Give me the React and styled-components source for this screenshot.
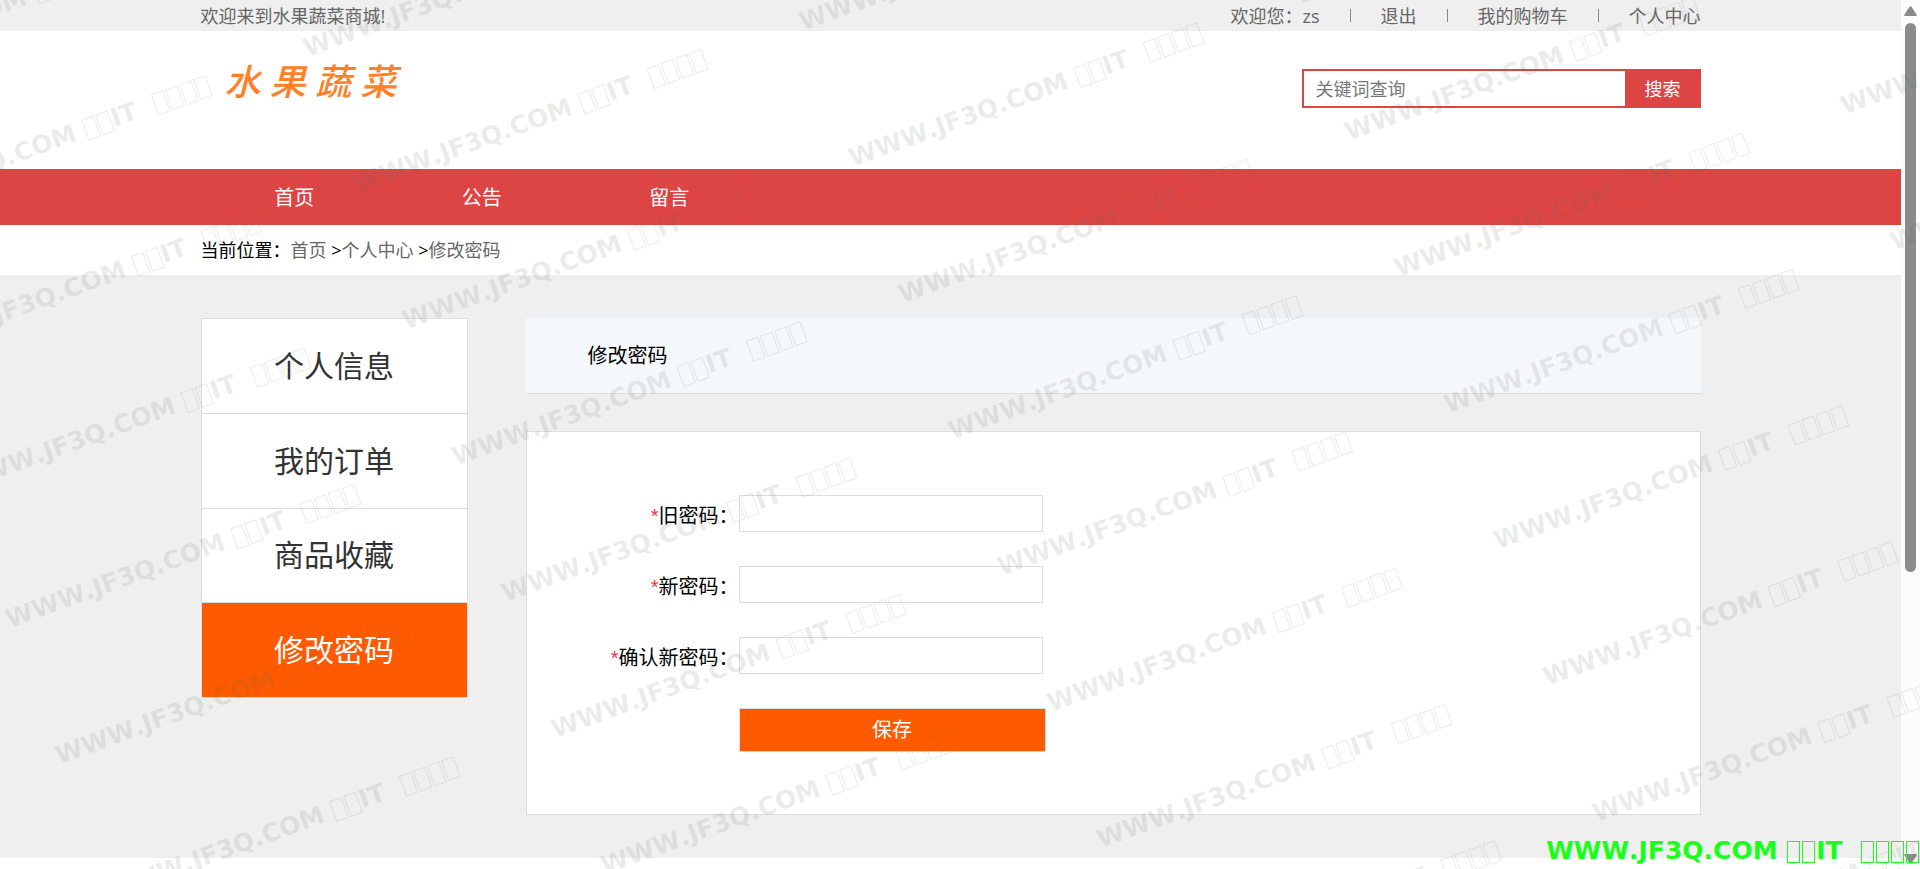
import React from "react";
import styled, { createGlobalStyle } from "styled-components";

const GlobalStyle = createGlobalStyle`
  *, *::before, *::after { box-sizing: border-box; }
  body {
    margin: 0;
    background: #fff;
    color: #000;
    font: 18px/24px "Open Sans", "Noto Sans CJK SC", sans-serif;
  }
  ul, ol { list-style: none; margin: 0; padding: 0; }
  a { color: inherit; text-decoration: none; }
  button, input { font: inherit; }
`;

const Shell = styled.div`
  position: relative;
  display: flex;
  min-height: 100vh;
  overflow: hidden;
`;

const Page = styled.div`
  flex: 1;
  min-width: 0;
`;

const Container = styled.div`
  max-width: 1500px;
  margin: 0 auto;
`;

const TopBar = styled.div`
  background: #efefef;
  color: #666;
`;

const TopBarInner = styled(Container)`
  display: flex;
  justify-content: space-between;
  align-items: center;
  height: 31px;
`;

const UserLinks = styled.ul`
  display: flex;
  align-items: center;

  li {
    display: flex;
    align-items: center;
  }

  li + li::before {
    content: "";
    width: 1px;
    height: 13px;
    margin: 0 30px;
    background: #888;
  }
`;

const Header = styled(Container)`
  display: flex;
  justify-content: space-between;
  align-items: flex-start;
  height: 138px;
`;

const Logo = styled.a`
  padding: 31px 0 0 24px;
  color: #ff8127;
  font-size: 36px;
  font-style: italic;
  font-weight: 500;
  line-height: 40px;
`;

const SearchForm = styled.form`
  display: flex;
  width: 399px;
  height: 39px;
  margin-top: 38px;
`;

const SearchInput = styled.input`
  flex: 1;
  min-width: 0;
  padding: 0 12px;
  border: 2px solid #d44;
  border-right: 0;
  border-radius: 0;
  background: #fff;
  outline: none;

  &::placeholder {
    color: #777;
    opacity: 1;
  }
`;

const SearchButton = styled.button`
  width: 76px;
  padding: 0;
  border: 0;
  background: #d44;
  color: #fff;
`;

const NavBar = styled.nav`
  background: #d44;
`;

const NavList = styled.ul`
  display: flex;
  max-width: 1500px;
  margin: 0 auto;
`;

const NavItem = styled.li`
  flex: 0 0 12.5%;
  padding-top: 2px;
  color: #fff;
  font-size: 20px;
  line-height: 54px;
  text-align: center;
`;

const Breadcrumb = styled(Container)`
  height: 50px;
  line-height: 50px;

  a { color: #666; }
`;

const Main = styled.main`
  padding: 43px 0;
  background: #efefef;
`;

const Columns = styled(Container)`
  display: flex;
  align-items: flex-start;
  gap: 58px;
`;

const SideMenu = styled.ul`
  display: flex;
  flex-direction: column;
  flex: 0 0 267px;
  height: 380px;
  border: 1px solid #ddd;
  border-bottom: 0;
  background: #fff;
`;

const SideItem = styled.li`
  flex: 1;
  display: flex;
  border-bottom: 1px solid #ddd;
  background: ${(p) => (p.$active ? "#ff5a00" : "#fff")};
  color: ${(p) => (p.$active ? "#fff" : "#333")};
  font-size: 30px;

  a {
    flex: 1;
    display: flex;
    align-items: center;
    justify-content: center;
  }
`;

const Content = styled.section`
  flex: 1;
  min-width: 0;
`;

const Title = styled.h1`
  height: 76px;
  margin: 0 0 37px;
  padding-left: 62px;
  border-bottom: 1px solid #ddd;
  background: #f4f8fb;
  font-size: 20px;
  font-weight: 400;
  line-height: 75px;
`;

const FormPanel = styled.form`
  display: flex;
  flex-direction: column;
  gap: 34px;
  padding: 63px 0 62px;
  border: 1px solid #ddd;
  background: #fff;
  font-size: 20px;
`;

const Field = styled.div`
  display: flex;
  align-items: center;
`;

const FieldLabel = styled.label`
  width: 212px;
  padding-top: 4px;
  text-align: right;
`;

const Required = styled.span`
  color: #f8354a;
  font-family: "Liberation Sans", sans-serif;
`;

const FieldInput = styled.input`
  width: 304px;
  height: 37px;
  padding: 0 12px;
  border: 1px solid #ddd;
  border-radius: 0;
  background: #fff;
  outline: none;
`;

const SaveButton = styled.button`
  width: 307px;
  height: 44px;
  margin-left: 212px;
  padding: 0;
  border: 1px solid #ddd;
  background: #ff5a00;
  color: #fff;
`;

const ScrollTrack = styled.div`
  display: flex;
  flex-direction: column;
  align-items: center;
  flex: 0 0 19px;
  padding: 6px 0 5px;
  background: #fcfcfc;

  svg { display: block; fill: #8b8b8b; }
`;

const ScrollRail = styled.div`
  flex: 1;
  display: flex;
  flex-direction: column;
  margin: 7px 0;
`;

const ScrollThumb = styled.div`
  flex: 2;
  width: 11px;
  border-radius: 6px;
  background: #8b8b8b;
`;

const ScrollRest = styled.div`
  flex: 1;
`;

const Mark = styled.span`
  font: bold 25px/29px "DejaVu Sans", sans-serif;
  font-kerning: none;
  white-space: pre;
`;

const Box = styled.span`
  display: inline-block;
  width: 13px;
  height: 22px;
  margin: 0 1px;
  border: 1px solid currentColor;
  vertical-align: -4px;
`;

const MarkLayer = styled.div`
  position: absolute;
  inset: 0;
  overflow: hidden;
  pointer-events: none;
`;

const MarkGrid = styled.div`
  position: absolute;
  left: -643px;
  top: 224px;
  display: grid;
  grid-template-columns: repeat(6, 475px);
  grid-auto-rows: 145px;
  color: rgba(100, 100, 100, 0.13);
  transform: rotate(-20deg);
  transform-origin: 0 0;
`;

const SiteMark = styled.div`
  position: absolute;
  right: 0;
  bottom: 4px;
  display: flex;
  color: #1aff1a;
  pointer-events: none;
`;

const Watermark = () => (
  <Mark>
    WWW.JF3Q.COM <Box /><Box />IT{"  "}<Box /><Box /><Box /><Box />
  </Mark>
);

// Cells of the rotated grid; those that fall wholly outside the window stay empty.
const markCells = Array.from({ length: 66 }, (_, i) => {
  const u = (i % 6) * 475;
  const v = Math.floor(i / 6) * 145;
  const angle = (20 * Math.PI) / 180;
  const x = -643 + u * Math.cos(angle) + v * Math.sin(angle);
  const y = 224 - u * Math.sin(angle) + v * Math.cos(angle);
  return x > -355 && x < window.innerWidth && y > -25 && y < window.innerHeight + 120;
});

const navLinks = ["首页", "公告", "留言"];
const sideLinks = ["个人信息", "我的订单", "商品收藏", "修改密码"];
const fields = [
  { id: "old-password", label: "旧密码" },
  { id: "new-password", label: "新密码" },
  { id: "confirm-password", label: "确认新密码" },
];

export default function App() {
  return (
    <Shell lang="zh-CN">
      <GlobalStyle />
      <Page>
        <TopBar>
          <TopBarInner>
            <span>欢迎来到水果蔬菜商城!</span>
            <UserLinks>
              <li>欢迎您：zs</li>
              <li><a href="#logout">退出</a></li>
              <li><a href="#cart">我的购物车</a></li>
              <li><a href="#account">个人中心</a></li>
            </UserLinks>
          </TopBarInner>
        </TopBar>

        <Header as="header">
          <Logo href="#home">水 果 蔬 菜</Logo>
          <SearchForm role="search" onSubmit={(e) => e.preventDefault()}>
            <SearchInput type="text" placeholder="关键词查询" aria-label="关键词查询" />
            <SearchButton type="submit">搜索</SearchButton>
          </SearchForm>
        </Header>

        <NavBar>
          <NavList>
            {navLinks.map((name) => (
              <NavItem key={name}><a href="#nav">{name}</a></NavItem>
            ))}
          </NavList>
        </NavBar>

        <Breadcrumb>
          当前位置：<a href="#home">首页</a> &gt;<a href="#account">个人中心</a> &gt;
          <a href="#password">修改密码</a>
        </Breadcrumb>

        <Main>
          <Columns>
            <SideMenu>
              {sideLinks.map((name) => (
                <SideItem key={name} $active={name === "修改密码"}>
                  <a href="#side">{name}</a>
                </SideItem>
              ))}
            </SideMenu>
            <Content>
              <Title>修改密码</Title>
              <FormPanel onSubmit={(e) => e.preventDefault()}>
                {fields.map(({ id, label }) => (
                  <Field key={id}>
                    <FieldLabel htmlFor={id}><Required>*</Required>{label}：</FieldLabel>
                    <FieldInput id={id} type="password" />
                  </Field>
                ))}
                <SaveButton type="submit">保存</SaveButton>
              </FormPanel>
            </Content>
          </Columns>
        </Main>
      </Page>

      <ScrollTrack aria-hidden="true">
        <svg width="13" height="10" viewBox="0 0 13 10">
          <path d="M5.4 1Q6.5-.6 7.6 1L12.6 8.4Q13.2 10 11.6 10H1.4Q-.2 10 .4 8.4Z" />
        </svg>
        <ScrollRail>
          <ScrollThumb />
          <ScrollRest />
        </ScrollRail>
        <svg width="13" height="10" viewBox="0 0 13 10">
          <path d="M5.4 9Q6.5 10.6 7.6 9L12.6 1.6Q13.2 0 11.6 0H1.4Q-.2 0 .4 1.6Z" />
        </svg>
      </ScrollTrack>

      <MarkLayer aria-hidden="true">
        <MarkGrid>
          {markCells.map((visible, i) => (visible ? <Watermark key={i} /> : <span key={i} />))}
        </MarkGrid>
      </MarkLayer>
      <SiteMark><Watermark /></SiteMark>
    </Shell>
  );
}
